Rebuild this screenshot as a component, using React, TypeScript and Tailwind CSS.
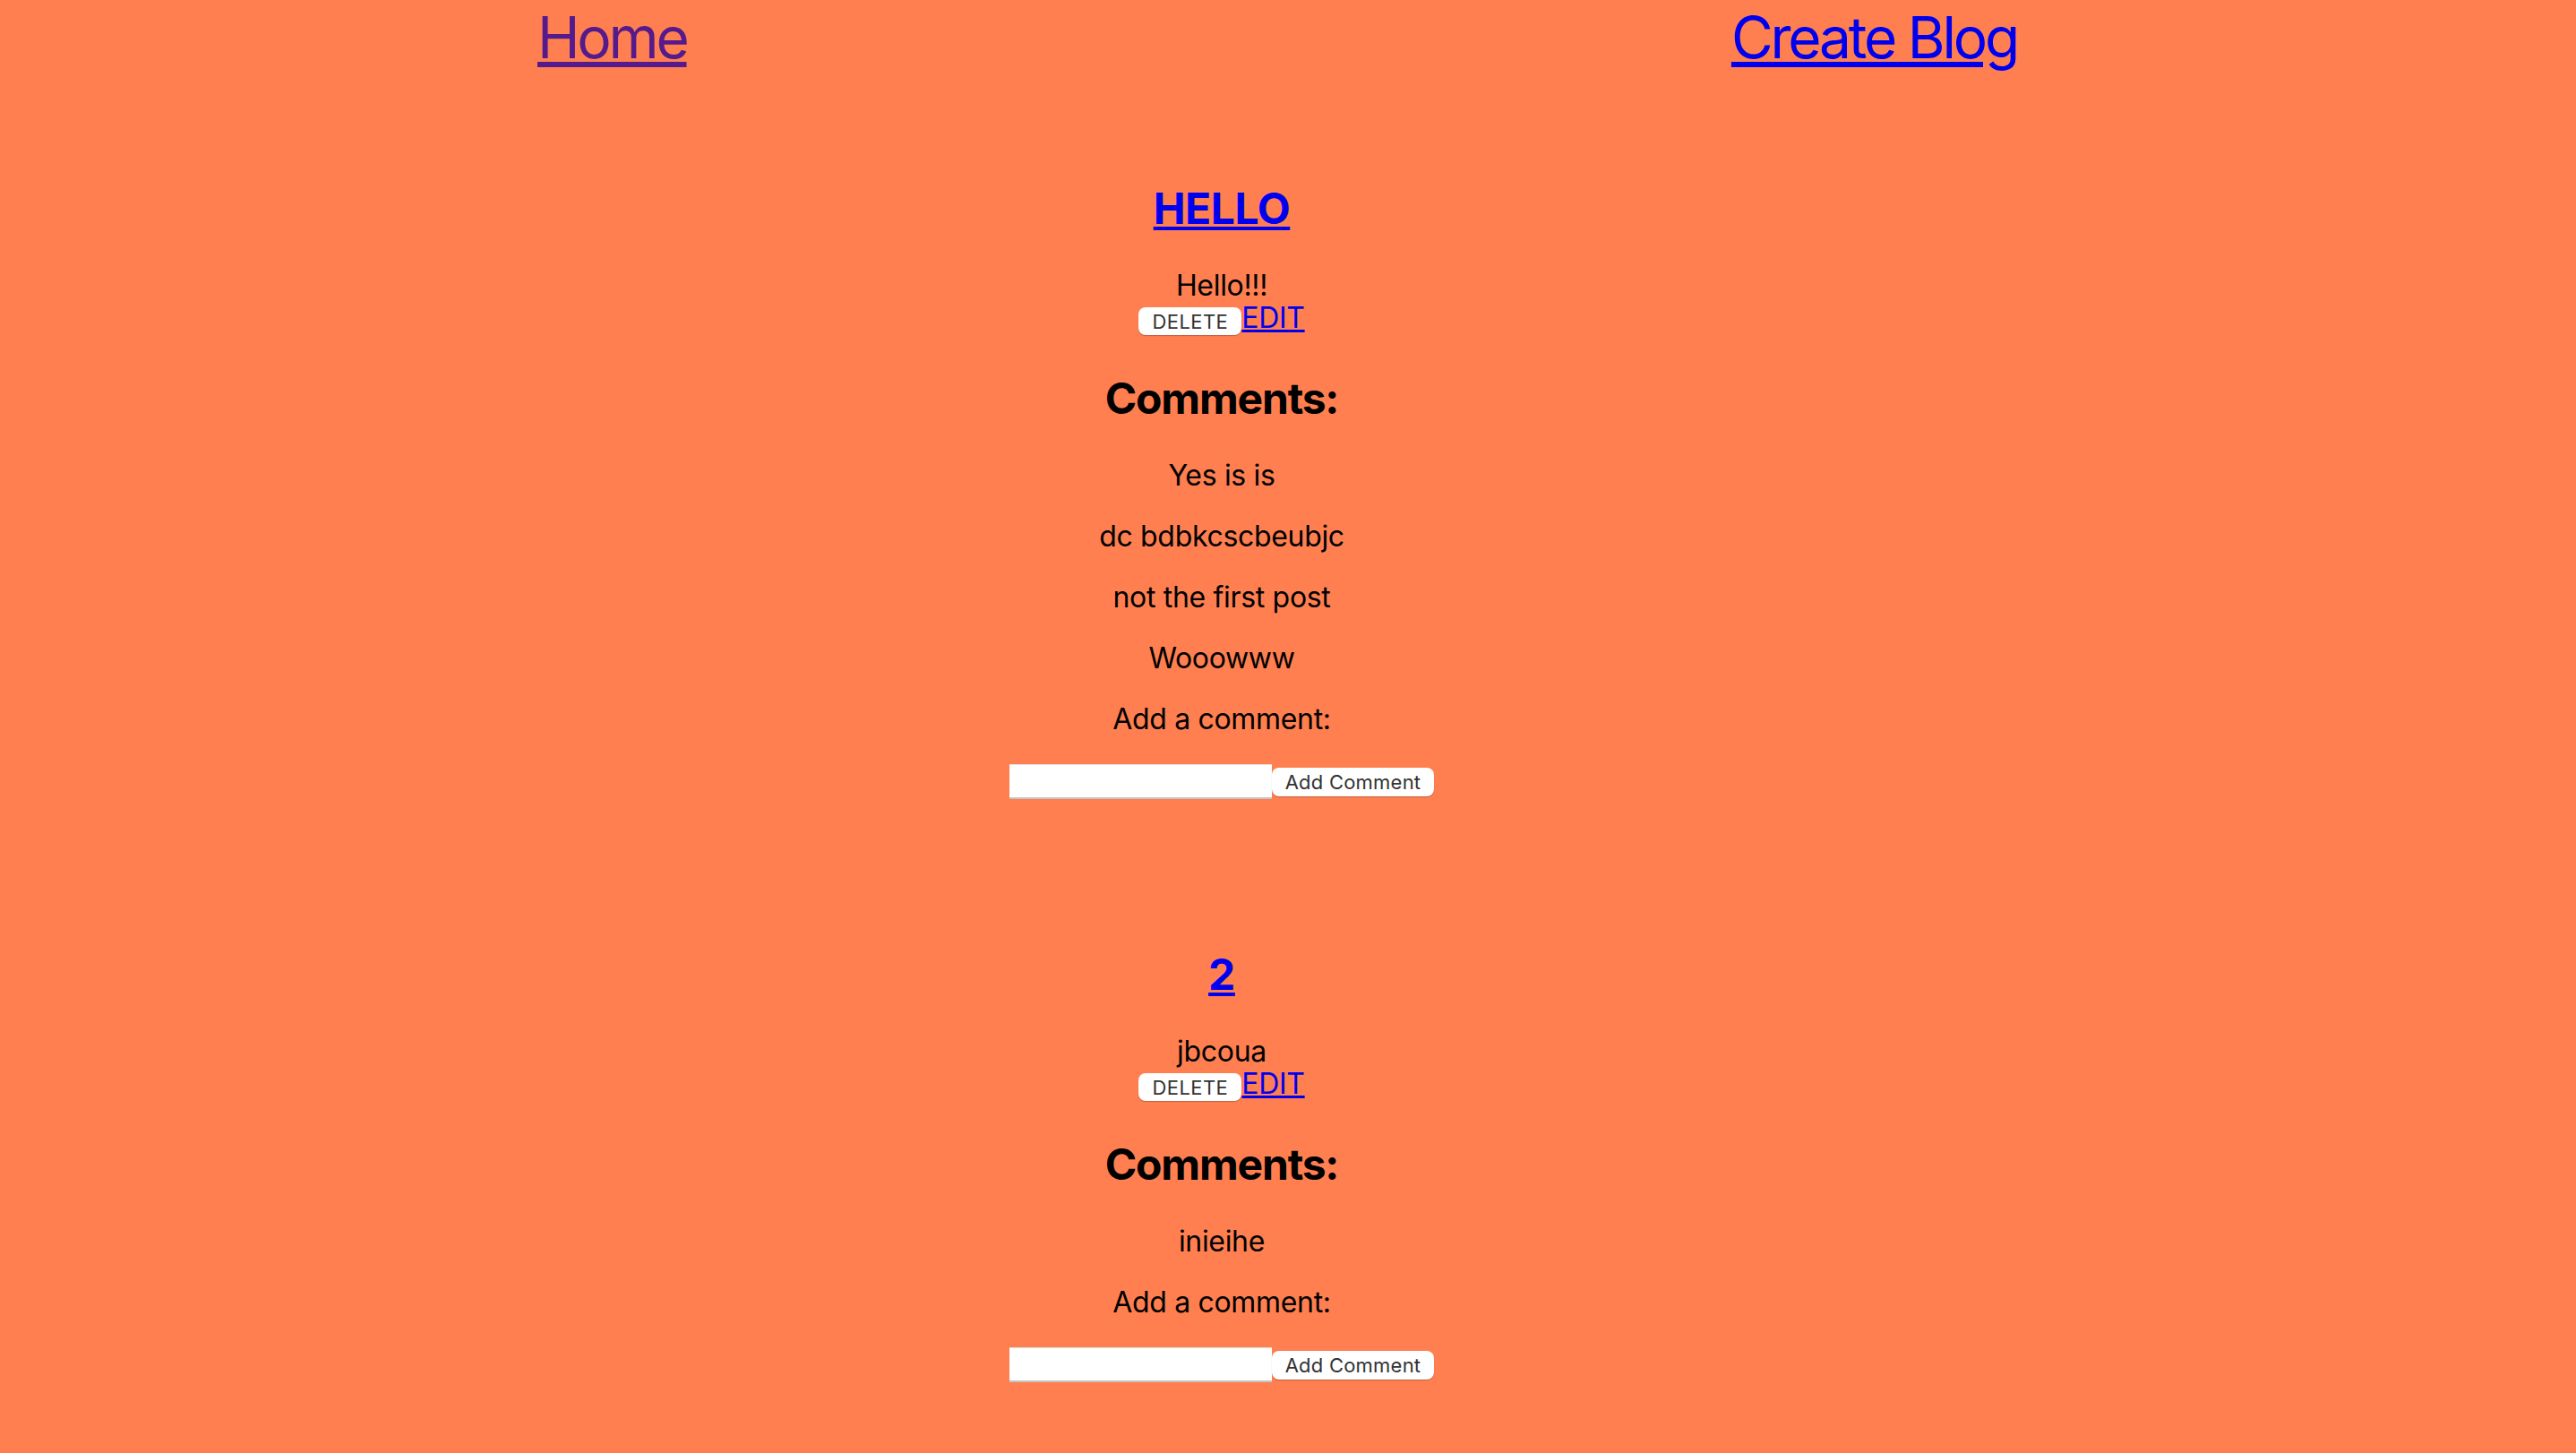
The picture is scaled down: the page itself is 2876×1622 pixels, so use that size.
const posts = [
  {
    id: 1,
    title: "HELLO",
    body: "Hello!!!",
    comments: ["Yes is is", "dc bdbkcscbeubjc", "not the first post", "Wooowww"]
  },
  {
    id: 2,
    title: "2",
    body: "jbcoua",
    comments: ["inieihe"]
  }
];

const BlogPost = ({ post, first }: { post: typeof posts[number], first: boolean }) => {
  return (
    <div className={`flex flex-col items-center ${first ? "mt-[125px]" : "mt-[168px]"}`}>
      <h2 className="text-[48px] leading-[56px] font-bold tracking-[-0.01em]">
        <a href="#" className="text-[#0000ee] underline">{post.title}</a>
      </h2>
      <p className="mt-[40px] text-[32px] leading-[36px]">{post.body}</p>
      <div className="flex items-start">
        <button className="mt-[6px] h-[31px] w-[115px] rounded-[8px] bg-white text-[22px] leading-none tracking-[0.02em] text-[#333] shadow-[0_1px_1px_rgba(0,0,0,0.25)]">
          DELETE
        </button>
        <a href="#" className="text-[32px] leading-[36px] text-[#0000ee] underline">EDIT</a>
      </div>
      <h2 className="mt-[43px] text-[48px] leading-[56px] font-bold tracking-[-0.025em]">Comments:</h2>
      <div className="mt-[40px] flex flex-col items-center gap-[32px] text-[32px] leading-[36px]">
        {post.comments.map((comment, index) => (
          <p key={index}>{comment}</p>
        ))}
        <p>Add a comment:</p>
      </div>
      <form className="mt-[32px] flex items-center" onSubmit={e => e.preventDefault()}>
        <input
          type="text"
          className="h-[39px] w-[293px] bg-white shadow-[inset_0_1px_0_rgba(0,0,0,0.12)] border-b-2 border-[#c4c4c4] outline-none"
        />
        <button className="h-[32px] w-[181px] rounded-[8px] bg-white text-[22px] leading-none tracking-[0.01em] text-[#333] shadow-[0_1px_1px_rgba(0,0,0,0.25)]">
          Add Comment
        </button>
      </form>
    </div>
  );
};

export default function App() {
  return (
    <div className="min-h-[1622px] bg-[#ff7f50] font-[Inter,sans-serif] text-black tracking-[-0.02em]">
      <nav className="flex justify-between pl-[600px] pr-[624px] pt-[4px] text-[64px] leading-[76px] tracking-[-0.05em]">
        <a href="#" className="text-[#551a8b] underline">Home</a>
        <a href="#" className="text-[#0000ee] underline">Create Blog</a>
      </nav>
      <div className="flex flex-col items-center pr-[148px]">
        {posts.map((post, index) => (
          <BlogPost key={post.id} post={post} first={index === 0} />
        ))}
      </div>
    </div>
  );
}
